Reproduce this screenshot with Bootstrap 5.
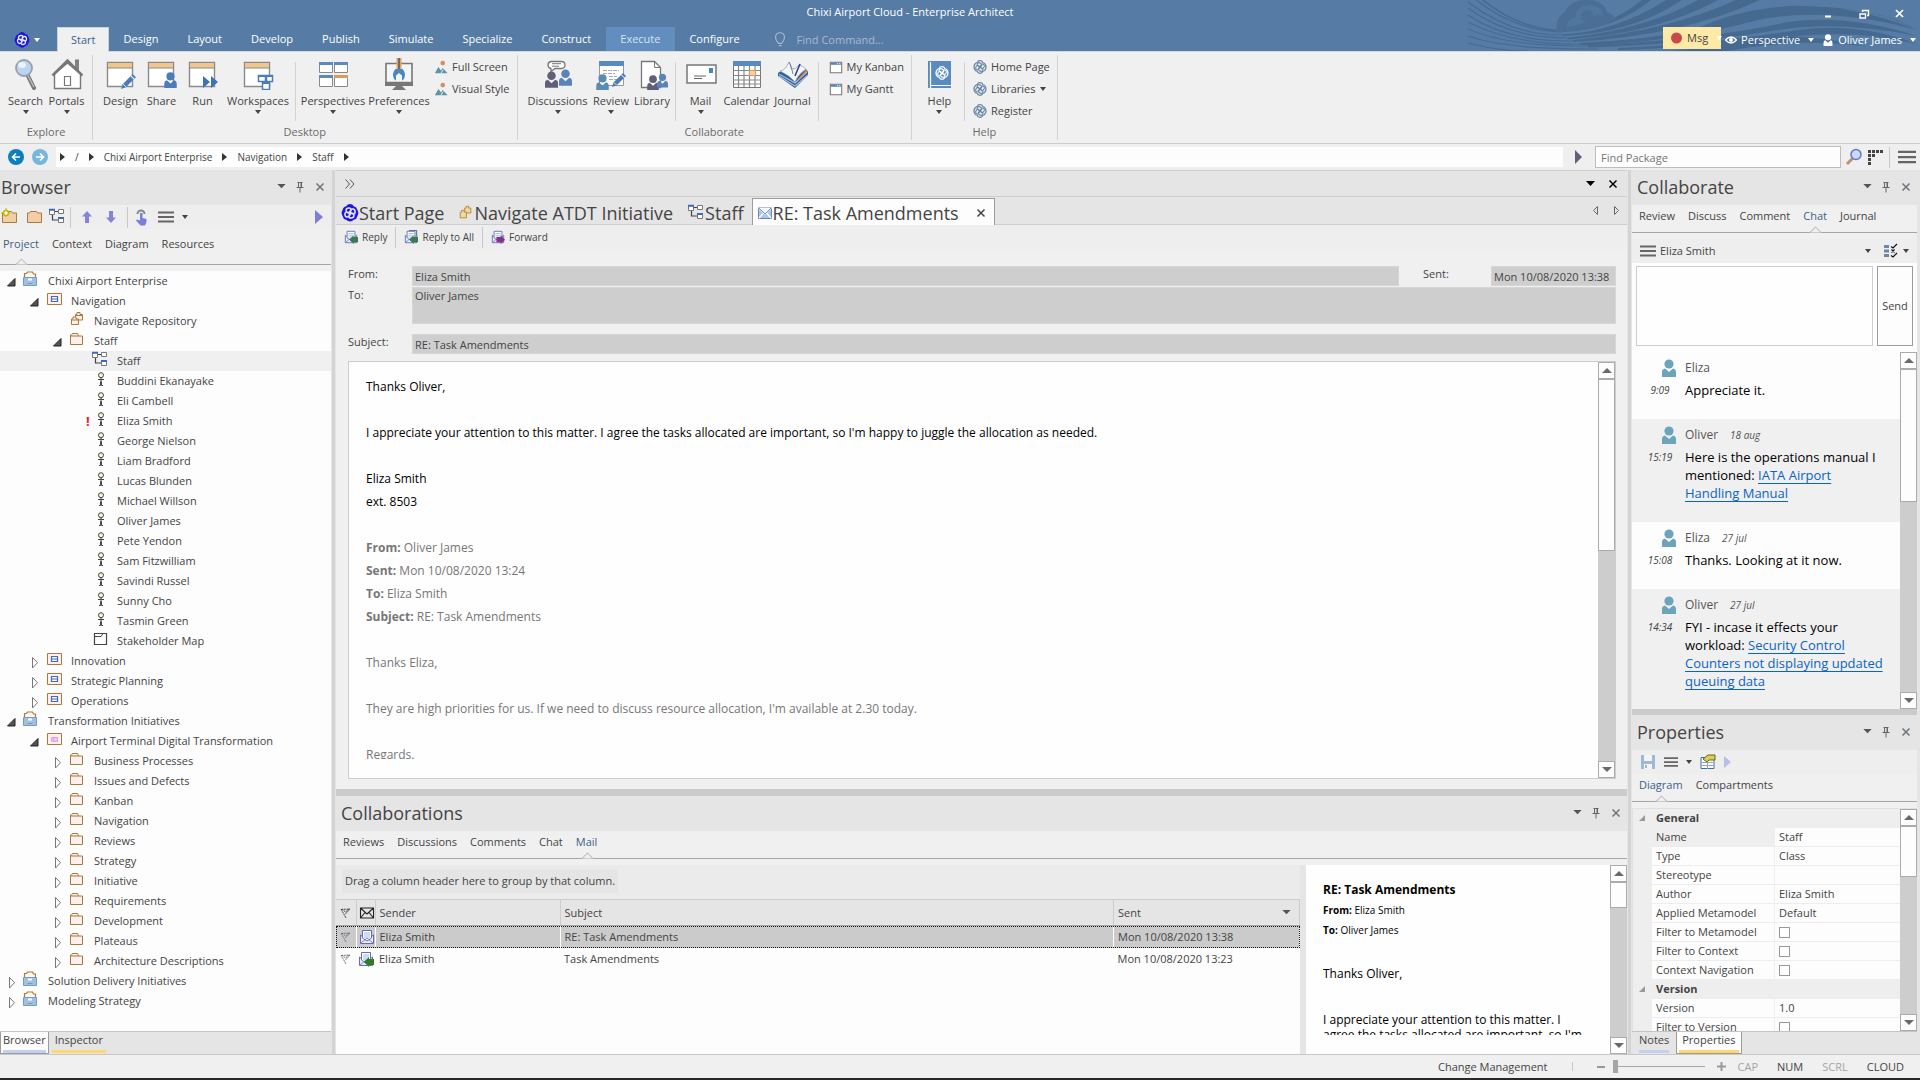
<!DOCTYPE html>
<html lang="en">
<head>
<meta charset="utf-8">
<meta name="viewport" content="width=device-width, initial-scale=1">
<title>Chixi Airport Cloud - Enterprise Architect</title>
<link rel="stylesheet" href="https://cdn.jsdelivr.net/npm/bootstrap@5.3.0/dist/css/bootstrap.min.css">
<style>
:root{--ui:"Open Sans","Noto Sans",sans-serif;--blue:#567ca6;--bar:#f0f0f0;--head:#e5e5e5;--line:#cdcdcd;--ink:#444}
body{font:11px/16px var(--ui);color:var(--ink);background:#e5e5e5;overflow:hidden}
button,input,select,textarea{font:inherit;color:inherit;border:0;background:none;padding:0;margin:0;border-radius:0;outline:0}
a{color:inherit;text-decoration:none}
svg{display:block;flex:none}
.i12{width:12px;height:12px}.i14{width:14px;height:14px}.i16{width:16px;height:16px}.i18{width:18px;height:18px}.i32{width:32px;height:32px}
.caret-sm{width:0;height:0;border:3px solid transparent;border-top:4px solid currentColor;border-bottom:0;flex:none}
/* title bar */
.titlebar{background:var(--blue);color:#fff;height:51px}
.banner{right:3px;top:0;width:449px;height:51px}
.cap-row{height:27px}.caption-txt{padding-top:4px}
.win-ctl{width:100px;padding-right:12px}
.rtab{padding:0 15px 0 14px;height:24px;line-height:23px;display:block}
.rtab.on{background:var(--bar);color:#3d5f8a;height:25px;border:1px solid #c9d3de;border-bottom:0;padding:0 13px}
.rtab.hot{background:#618ebf;color:#d5e2f0}
.app-btn{width:57px;padding-left:14px}
.find-cmd{width:200px;color:#a9b9ca}.find-cmd::placeholder{color:#a9b9ca}
.msg-btn{background:#ffe9a6;color:#444;height:22px;width:58px}
/* ribbon */
.ribbon{background:var(--bar);border-bottom:1px solid var(--line);border-top:1px solid #d8d8d8;height:93px}
.rgroup{border-right:1px solid #d2d2d2;margin:3px 0;padding:0 7px}
.rgroup.first{padding:0 5px}
.rgroup .rg-items{height:68px}
.rg-label{color:#6b6b6b;line-height:18px}
.vsep{width:1px;background:#d2d2d2;margin:7px 2px 2px}
.rb{padding-top:3px;width:41px;line-height:18px}
.rb svg{margin-bottom:2px}
.rb.w46{width:46px}.rb.w62{width:62px}.rb.w66{width:66px}.rb.w70{width:70px}
.rcol{padding-top:1px}
.rsmall{height:22px;gap:4px}
/* address bar */
.addr{height:27px;background:#efefef}
.addr .crumbs{background:#fdfdfd;height:20px;gap:10px;font-size:10px}
.tri{width:0;height:0;border:4px solid transparent;border-left:5px solid #333;border-right:0}
.find-pkg{width:246px;height:22px;border:1px solid #bdbdbd;background:#fdfdfd;padding:0 5px}
/* docks */
.dock-l{width:331px}.dock-r{width:285px;margin-right:3px}
.split-v{width:5px;background:#d4d4d4;border-right:1px solid #e5e5e5;border-left:1px solid #e5e5e5}
.dock-head{height:35px;background:var(--head);padding:0 5px 2px 1px}
.dock-title{font:18px/32px var(--ui);color:#444}
.tool{height:24px;background:#eee}
.sep24{width:1px;height:21px;background:#c8c8c8}
.dtabs{background:var(--bar);border-bottom:1px solid #a5a5a5}
.dtabs a{position:relative;display:block}
.dtabs a.on{color:#3d5f8a}
.dtabs a.on::after{content:"";position:absolute;left:50%;bottom:-5px;width:9px;height:9px;margin-left:-4px;transform:rotate(45deg);background:var(--bar);border:1px solid #a5a5a5;border-color:#a5a5a5 transparent transparent #a5a5a5;clip-path:polygon(0 0,100% 0,0 100%)}
.gapbar{height:6px;background:var(--bar)}
.pane-white{background:#fdfdfd}
/* tree */
.tree{list-style:none;margin:0;padding:0}
.tree li{height:20px;line-height:20px;display:flex;position:relative}
.tree li.sel{background:#f0f0f0}
.tree li>.i18{margin-right:8px}
.tree .tw{width:18px;height:20px;flex:none}
.lv0{padding-left:4px}.lv1{padding-left:27px}.lv2{padding-left:50px}.lv3{padding-left:73px}
.bang{position:absolute;left:86px;color:#f01818;font-weight:700;font-size:13px}
.btabs{height:23px;background:var(--head);border-top:1px solid #c4c4c4}
.btab{height:22px;padding:0 2px;line-height:16px;border:1px solid transparent;border-top:0}
.btab span{display:block;border-bottom:3px solid #c3d0f0;height:21px}
.btab.cur{background:#fdfdfd;border-color:#9c9c9c}
.btab.yel span{border-color:#ffd86b;padding:0 3px}
/* document area */
.docbar{height:27px;background:var(--head);border:1px solid var(--line);border-width:1px 0}
.doctabs{height:28px;background:var(--head);border-bottom:1px solid var(--line);font-size:18px;line-height:22px;padding-left:5px}
.doctab{padding:4px 14px 0 0}
.doctabs .cur{background:#fdfdfd;border:1px solid #9c9c9c;border-bottom:0;height:27px;margin-top:1px;padding:2px 7px 0 4px}
.mailtool{gap:4px;font-size:10px}
.mailform{background:var(--bar);padding:17px 11px 10px 12px}
.fgrid{display:grid;grid-template-columns:64px 1fr 92px 125px;row-gap:1px}
.fgrid label{line-height:15px}
.fld{background:#cecece;border:1px solid #d6d6d6;padding:0 2px;height:20px;line-height:15px;width:100%;resize:none;display:block}
.mail-box{border:1px solid var(--line);background:#fefefe;margin-top:7px}
.mail-txt{font:12px/23px var(--ui);color:#000;padding:13px 17px 0;margin-bottom:19px;overflow:hidden}
.mail-txt p{margin:0 0 23px}
.quoted{color:#777}
/* scrollbars */
.sbar{width:17px;background:#cdcdcd}
.sbar button,.sbar i{display:flex;align-items:center;justify-content:center;background:#fdfdfd;border:1px solid #ababab;flex:none;height:17px;width:100%}
.sbar .dn{margin-top:auto}
.up-a,.dn-a{width:0;height:0;border:5px solid transparent}
.up-a{border-bottom:5px solid #6a6a6a;border-top:0}.dn-a{border-top:5px solid #6a6a6a;border-bottom:0}
.th172{height:172px!important}.th150{height:133px!important}.th26{height:26px!important}.th51{height:51px!important}
/* mail list */
.collab{height:265px;border-top:7px solid #cbcbcb}
.groupby{height:34px;background:#ebebeb;padding:4px 6px}
.groupby span{background:#e5e5e5;padding:0 3px;line-height:24px;display:inline-block}
.mtable{width:100%;table-layout:fixed;border-collapse:collapse}
.mtable th{font-weight:400;background:var(--head);height:26px;border:1px solid var(--line);border-bottom-color:#a5a5a5;border-left:0;padding:0 4px}
.mtable td{height:23px;padding:0 4px}
.mtable tr.pick td{height:22px;background:#cbcbcb;border-right:1px solid #fff}
.mtable tr.pick{outline:1px dotted #111;outline-offset:-1px}
.c-f{width:20px}.c-m{width:19px}.c-s{width:185px}.c-d{width:186px}
.mtable .ic{padding:0 2px}
.split-p{width:6px;background:var(--head)}
.preview{width:304px;background:#fefefe;color:#000;padding:14px 17px 0;margin-bottom:0}
.pv-clip{height:156px;overflow:hidden;font-size:12px;line-height:15px}
.pv-clip p{margin:0}
/* chat */
.chatbox{height:80px;border:1px solid var(--line);background:#fefefe;resize:none}
.send{width:36px;height:80px;border:1px solid #9c9c9c;background:#fdfdfd}
.msg{padding:7px 0 12px 12px;gap:9px}
.msg:nth-child(even){background:#f0f0f0}
.msg .when{width:32px;font-style:italic;font-size:10px;line-height:18px}
.msg .who{font-size:12px;line-height:18px;color:#555}
.msg .who em{font-size:10px;margin-left:12px}
.msg .say{font-size:13px;line-height:18px;color:#000;margin-top:4px;padding-bottom:8px;white-space:nowrap}
.msg .say a{color:#0b63c5;text-decoration:underline;text-underline-offset:3px}
.bare-select{appearance:none}
/* property grid */
.pgrid{width:100%;table-layout:fixed;border-collapse:separate;border-spacing:0}
.pgrid td,.pgrid th{height:19px;padding:0 4px;border-bottom:1px solid #ededed;background:#fdfdfd;line-height:18px;font-weight:400}
.pgrid .gut{background:#eee;padding:0}
.pgrid .nm{border-right:1px solid #ededed}
.pgrid .nm.sel{background:#eee}
.pgrid .cat th{background:#eee;font-weight:700}
.g1{width:19px}.g2{width:123px}
.pgrid input[type=checkbox]{appearance:none;width:11px;height:11px;border:1px solid #999;background:#fff;display:block}
.tri-c{width:0;height:0;border-left:6px solid transparent;border-bottom:6px solid #999;margin-left:6px}
/* status */
.status{height:24px;background:var(--bar);border-top:1px solid #c8c8c8}
.zoomr{appearance:none;width:92px;height:14px}
.zoomr::-webkit-slider-runnable-track{height:1px;background:#a5a5a5}
.zoomr::-webkit-slider-thumb{appearance:none;width:5px;height:13px;background:#a5a5a5;margin-top:-6px}
.keys{gap:19px;padding-right:16px}
.dim{color:#a5a5a5}.strip{height:2px;background:#2b2729}
</style>
</head>
<body class="vh-100 d-flex flex-column">
<svg width="0" height="0" class="position-absolute" aria-hidden="true"><defs>
<symbol id="knot" viewBox="0 0 16 16"><g fill="none" stroke="currentColor" stroke-width="1.500"><path d="M8 .8q2.500 0 3.200 2.200 2.500.4 3 2.600 1.200 2.400 0 4.800-.5 2.200-3 2.600-.7 2.200-3.200 2.200T4.800 13q-2.500-.4-3-2.600-1.200-2.400 0-4.800.5-2.200 3-2.600Q5.500.8 8 .8z"/><path d="M8 8Q3.500 6 5 4t4 0-1 4zM8 8q4.500 2 3 4t-4 0 1-4zM8 8q2-4.500 4-3t0 4-4-1zM8 8q-2 4.500-4 3t0-4 4 1z" stroke-width="1.200"/></g></symbol>
<symbol id="logo" viewBox="0 0 16 16"><path d="M8 0a4 4 0 0 1 3.400 1.900A4 4 0 0 1 14.500 5.200 5 5 0 0 1 14.500 10.800 4 4 0 0 1 11.400 14.100 4.500 4.500 0 0 1 4.600 14.100 4 4 0 0 1 1.500 10.800 5 5 0 0 1 1.500 5.200 4 4 0 0 1 4.600 1.900 4 4 0 0 1 8 0z" fill="#1f18dc"/><g fill="none" stroke="#e6e8ff" stroke-width="1.300"><path d="M6.500 8C3.500 7 4 3.500 7 3.500c2.500 0 3 3-.5 4.500zM9.500 8c3 1 2.500 4.500-.5 4.500-2.500 0-3-3 .5-4.500zM8 6.500c1-3 4.500-2.500 4.500.5 0 2.500-3 3-4.500-.5zM8 9.500c-1 3-4.500 2.500-4.500-.5 0-2.500 3-3 4.500.5z"/></g></symbol>
<symbol id="pin" viewBox="0 0 12 12"><path d="M3.500 1.500h5M4.500 1.500v5M7.500 1.500v5M2.500 6.500h7M6 6.500v5" fill="none" stroke="#666"/><path d="M6.500 2h1v4h-1z" fill="#666"/></symbol>
<symbol id="ex" viewBox="0 0 12 12"><path d="M2.500 2.500l7 7M9.500 2.500l-7 7" stroke="currentColor" stroke-width="1.500"/></symbol>
<symbol id="ham" viewBox="0 0 16 16"><path d="M0 3.500h16M0 8h16M0 12.500h16" stroke="#666" stroke-width="2"/></symbol>
<symbol id="down" viewBox="0 0 10 6"><path d="M0 0h10L5 5z" fill="#555"/></symbol>
<symbol id="win" viewBox="0 0 32 32"><path d="M2.500 4.500h25v24h-25z" fill="#fff" stroke="#8a8a8a" stroke-width="1.400"/><path d="M3 5h24v5H3z" fill="#efc68c"/><path d="M3 10h24" stroke="#8a8a8a"/></symbol>
<symbol id="pencil" viewBox="0 0 16 16"><path d="M1 15l1.500-4.500L12 1l3 3-9.500 9.500z" fill="#4a7cba"/><path d="M10 2.500l3.500 3.500" stroke="#fff"/><path d="M3 10.500l2.500 2.500" stroke="#fff" stroke-width=".8"/></symbol>
<symbol id="man" viewBox="0 0 14 18"><circle cx="7" cy="5" r="4.600"/><path d="M0 18v-5q0-3 3-3.600L7 13l4-3.600q3 .6 3 3.600v5z"/></symbol>
<symbol id="r-search" viewBox="0 0 32 32"><path d="M17 16l7 14" stroke="#777" stroke-width="4" stroke-linecap="round"/><path d="M17 16l7 13" stroke="#bbb" stroke-width="1.500"/><circle cx="14" cy="10" r="8" fill="#b9d6f0" stroke="#9a9fb0" stroke-width="1.800"/><ellipse cx="12" cy="7" rx="4" ry="3" fill="#e8f3fc"/></symbol>
<symbol id="r-house" viewBox="0 0 32 32"><path d="M25 12V2.500h2V14" fill="none" stroke="#777" stroke-width="1.800"/><path d="M3.500 16v14.500h26V16L16.500 5z" fill="#fff" stroke="#777" stroke-width="1.400"/><path d="M1.500 17.500L16.500 2.500l15 15" fill="none" stroke="#777" stroke-width="2.600"/><path d="M13.500 18.500h6v9h-6z" fill="#fff" stroke="#777" stroke-width="1.200"/></symbol>
<symbol id="r-design" viewBox="0 0 32 32"><use href="#win"/><use href="#pencil" x="15" y="15" width="17" height="17"/></symbol>
<symbol id="r-share" viewBox="0 0 32 32"><use href="#win"/><use href="#man" x="18" y="14" width="13" height="16" fill="#4a7cba"/></symbol>
<symbol id="r-run" viewBox="0 0 32 32"><use href="#win"/><path d="M16 18l7 6-7 6zM24 18l7 6-7 6z" fill="#3f72b5"/></symbol>
<symbol id="r-work" viewBox="0 0 32 32"><use href="#win"/><g fill="#fff" stroke="#4a7cba" stroke-width="1.500"><path d="M16.500 17.500h7v6h-7zM24.500 17.500h6v6h-6zM20.500 24.500h7v7h-7z"/><path d="M16.500 18h14M20.500 25h7" stroke-width="2"/></g></symbol>
<symbol id="r-persp" viewBox="0 0 32 32"><g fill="#fff" stroke="#8a8a8a"><path d="M2.500 4.500h13v10h-13zM17.500 4.500h13v10h-13zM2.500 17.500h13v11h-13zM17.500 17.500h13v11h-13z"/></g><path d="M2 4h14v3H2zM17 4h14v3H17zM2 17h14v3H2z" fill="#5a8bc0"/><path d="M17 17h14v3H17z" fill="#d99a63"/></symbol>
<symbol id="r-pref" viewBox="0 0 32 32"><path d="M3 5.500h26v19H3z" fill="#f5f5f5" stroke="#777" stroke-width="1.600"/><path d="M2 24h28v4H2zM13 28h6l4 4H9z" fill="#777"/><path d="M13.500 0h5v11h-5z" fill="#e0a565"/><path d="M16 0v11" stroke="#4a4a6a" stroke-width="1.400"/><path d="M12.500 11h7q4 4 1.500 10l-2 1.500v-5l-3-2.500-3 2.500v5L11 21q-2.500-6 1.500-10z" fill="#4a88c4"/></symbol>
<symbol id="pic" viewBox="0 0 16 16"><circle cx="10" cy="3.500" r="2.700" fill="#d58f60"/><path d="M1 15l4-7 3 4 2-3 5.500 6z" fill="#5b93a8"/><path d="M8 15l2.500-4" stroke="#fff"/></symbol>
<symbol id="r-disc" viewBox="0 0 32 32"><path d="M9 3.500h10q4 0 4 3.500t-4 3.500h-6l-4 3v-3Q6 10 6 7t3-3.500z" fill="#fff" stroke="#777" stroke-width="1.300"/><path d="M10 5.700h9M10 8.200h7" stroke="#777"/><use href="#man" x="3" y="13" width="13" height="17" fill="#5f6078"/><use href="#man" x="17" y="11" width="13" height="17" fill="#5a83ba"/></symbol>
<symbol id="r-rev" viewBox="0 0 32 32"><path d="M4.500 3.500h24v24h-24z" fill="#fff" stroke="#999"/><path d="M4 3h25v5H4z" fill="#5a8bc0"/><path d="M8 12.500h16M8 15.500h12M14 18.500h8M14 21.500h8" stroke="#aaa" stroke-dasharray="4 1"/><use href="#man" x="1" y="16" width="13" height="16" fill="#5a8bb0"/><use href="#pencil" x="16" y="14" width="16" height="16"/></symbol>
<symbol id="r-lib" viewBox="0 0 32 32"><path d="M5.500 3.500h13l6 6v20h-19z" fill="#fff" stroke="#777" stroke-width="1.300"/><path d="M18.500 3.500v6h6" fill="none" stroke="#777"/><use href="#man" x="11" y="17" width="12" height="15" fill="#5f6078"/><use href="#man" x="21" y="15" width="11" height="15" fill="#5a83ba"/></symbol>
<symbol id="r-mail" viewBox="0 0 32 32"><path d="M2 7h29v18H2z" fill="#fff" stroke="#777" stroke-width="1.500"/><path d="M24 10h4v5h-4z" fill="#4a83c0"/><path d="M9 18h12M9 20.500h8" stroke="#666" stroke-width="1.200"/></symbol>
<symbol id="r-cal" viewBox="0 0 32 32"><path d="M2.500 3.500h27v26h-27z" fill="#fff" stroke="#777"/><path d="M2 3h28v5H2z" fill="#5a8bc0"/><path d="M7.500 8v21M13 8v21M18.500 8v21M24 8v21M3 12.500h27M3 17.500h27M3 22h27M3 26h27" stroke="#888" stroke-width="1.200"/><path d="M18.500 12.500h6v5h-6z" fill="#f8d0a0" stroke="#d79a5a"/></symbol>
<symbol id="r-jour" viewBox="0 0 32 32"><path d="M1 15l3-2 14 8 11-10 2 3v3L18 30 1 18z" fill="#2f5a92"/><path d="M3 13Q8 13 12 4q3 3 2 7 5 1 8-4 4 1 7 4-7 4-11 13-6-7-15-11z" fill="#f4f8fd" stroke="#8fa3c0" stroke-width=".8"/><path d="M2 16l16 9 12-11M2 18l16 10 13-11" fill="none" stroke="#a9c2e4" stroke-width="1.200"/><path d="M12 4q3 6 4 12" fill="none" stroke="#6d84ac"/><path d="M23 6l-5 12" stroke="#39408a" stroke-width="1.600"/><path d="M30 12l-8 9" stroke="#e08a4a" stroke-width="1.600"/></symbol>
<symbol id="kan" viewBox="0 0 16 16"><path d="M1.500 2.500h13v12h-13z" fill="#fff" stroke="#777" stroke-width="1.200"/><path d="M2 3h12v2.500H2z" fill="#5a83ba"/><path d="M9 4.200h1.500M11.500 4.200H13" stroke="#fff"/></symbol>
<symbol id="r-help" viewBox="0 0 32 32"><path d="M5 3h23v27H5z" fill="#5a8bc0"/><path d="M7.500 4v26M7 27.500h21" stroke="#fff" stroke-width="1.200"/><use href="#knot" x="12" y="8" width="14" height="14" color="#fff"/></symbol>
<symbol id="folder" viewBox="0 0 18 18"><path d="M2.500 13.500V4h1l1-1.500h5L10.500 5h4v8.500z" fill="#fdf0ee" stroke="#ab7a38"/><path d="M3 5h8" stroke="#ab7a38"/></symbol>
<symbol id="bfolder" viewBox="0 0 18 18"><path d="M1.500 14.500V5h2l1-1.500h6L11.500 5h4v9.500z" fill="#f2cda6" stroke="#a87a45"/></symbol>
<symbol id="root" viewBox="0 0 18 18"><path d="M2.500 6.500v-4h2l1-1.500h5l1 2h2v3.500" fill="#fff7ee" stroke="#ab7a38" stroke-width="1.200"/><path d="M1.500 6.500h13v8h-13z" fill="#a3c1de" stroke="#6f9cc9"/><path d="M6 7.500h4v2H6z" fill="#fff"/><path d="M5.500 12.500h5" stroke="#6f9cc9"/></symbol>
<symbol id="view" viewBox="0 0 18 18"><path d="M2.500 2.500h14v11h-14z" fill="#fdf0ee" stroke="#ab7a38"/><path d="M6.500 5.500h6v5h-6zM6.500 8h6" fill="#fff" stroke="#4468c4" stroke-width="1.200"/></symbol>
<symbol id="viewp" viewBox="0 0 18 18"><path d="M2.500 2.500h14v11h-14z" fill="#fdf0ee" stroke="#ab7a38"/><path d="M6.500 6.500h6v4h-6zM8.500 6.500v4" fill="#f3c3ea" stroke="#e89be0"/></symbol>
<symbol id="navi" viewBox="0 0 18 18"><g fill="#fdf0ee" stroke="#ab7a38"><path d="M7.500 9V3.500h1.500v-2h3v2h2.500V9zM7.500 4.500h7"/><path d="M3.500 13.500V8h1.500V6h3v2h2.500v5.500zM3.500 9h7"/></g></symbol>
<symbol id="navi-g" viewBox="0 0 18 18"><g fill="#ecd6ae" stroke="#b58a20"><path d="M7.500 9V3.500h1.500v-2h3v2h2.500V9z"/><path d="M2.500 14.500V8h1.500V6h3v2h2.500v6.500z"/></g></symbol>
<symbol id="diag" viewBox="0 0 18 18"><path d="M4.500 6v6h6M6 3.500h4" fill="none" stroke="#444" stroke-width="1.200"/><g fill="#fff" stroke="#777"><path d="M1.500 1.500h5v5h-5zM10.500 1.500h5v4h-5zM10.500 9.500h5v5h-5z"/></g><path d="M1 .8h6v2H1zM10 9h6v2h-6z" fill="#3f66c0"/></symbol>
<symbol id="actor" viewBox="0 0 18 18"><circle cx="10" cy="4.200" r="2.500" fill="#fdf3d0" stroke="#444"/><path d="M10 7v4M7 8.500h6M9.500 10.500V14.500M10.500 10.500V14.500M8 14.500h1.500M10.500 14.500H12" stroke="#444" fill="none"/></symbol>
<symbol id="map" viewBox="0 0 18 18"><path d="M3.500 2.500h12v11h-12z" fill="#fff" stroke="#444" stroke-width="1.200"/><path d="M4 5.500h6l2-3" fill="none" stroke="#444"/></symbol>
<symbol id="tw-o" viewBox="0 0 18 20"><path d="M3.500 15H11V7.500z" fill="#555" stroke="#222"/></symbol>
<symbol id="tw-c" viewBox="0 0 18 20"><path d="M5.500 6.500v10.500L10.500 11.700z" fill="#fff" stroke="#777"/></symbol>
<symbol id="openmail" viewBox="0 0 16 16"><path d="M1.500 6v8.500h13V6L8 11z" fill="#e9ecff" stroke="#6a69b5"/><path d="M3.500 9V1.500h9V9L8 12z" fill="#fff" stroke="#6a69b5"/><path d="M5 4h6M5 6h6M5 8h6" stroke="#8fc0e6"/><path d="M2 14l6-5 6 5" fill="none" stroke="#6a69b5" stroke-width=".8"/></symbol>
<symbol id="arrow-l" viewBox="0 0 10 10"><path d="M0 5l5-5v2h5v6H5v2z"/></symbol>
<symbol id="flag" viewBox="0 0 16 16"><path d="M3 4.500l9-.5-5 5.500M3 4l5 9M4 4l3.500 3L11 4" fill="none" stroke="currentColor" stroke-dasharray="2 .7"/></symbol>
<symbol id="env" viewBox="0 0 16 16"><path d="M1.500 3h13v10h-13zM1.500 3L8 9l6.500-6M1.500 13L6 7.500M14.500 13L10 7.500" fill="none" stroke="#222" stroke-width="1.100"/></symbol>
<symbol id="mailtab" viewBox="0 0 16 16"><path d="M1.500 2.500h13v11h-13z" fill="#a9c8f0" stroke="#6f86a8"/><path d="M2 3l6 6 6-6zM2 13l4.500-5M14 13L9.500 8" fill="#eef5fd" stroke="#fff" stroke-width="1.200"/><path d="M2 3l6 6 6-6" fill="none" stroke="#6f86a8" stroke-width=".9"/></symbol>
</defs></svg>

<header class="titlebar position-relative">
<svg class="banner position-absolute" viewBox="0 0 449 51" preserveAspectRatio="none" aria-hidden="true">
<g fill="none" stroke="#476a92" stroke-width="1.100"><path d="M8 0Q50 32 95 32"/><path d="M15 0Q52 30 95 30.500" stroke-width="1.600"/><path d="M0 2Q44 36 95 35"/><path d="M0 8Q40 38 100 38"/><path d="M0 15Q40 42 105 41"/><path d="M0 22Q44 45 112 44"/><path d="M0 29Q40 47 120 46"/><path d="M0 36Q40 50 130 49"/><path d="M0 43Q30 51 60 51"/></g>
<g fill="#46698f"><path d="M95 32Q146 30 183 0h-9Q140 28 95 30z"/><path d="M95 36Q165 33 214 0h-16Q150 31 95 34.500z"/><path d="M100 39.500Q190 33 250 0h-20Q176 30 100 37.500z"/><path d="M105 42Q215 36 292 0h-24Q200 31 105 40z"/><path d="M112 45Q210 42 280 20 340 2 400 12 430 18 449 30 420 14 385 10 350 3 290 14 220 38 112 43z"/><path d="M112 45Q200 44 290 20 360 6 449 30 385 4 320 6 270 10 235 26 190 40 112 43z"/><path d="M120 47.500Q230 44 310 30 370 20 449 36 380 14 320 22 240 40 120 45z"/><path d="M150 50Q250 46 330 36 390 30 449 44 390 22 330 30 240 44 150 48z"/><path d="M200 51h60q70-14 140-4-80-18-130-6-40 8-70 10z"/></g>
<path d="M89 31q-2-14 8-19Q102-1 122 0q14 1 17 12 6 2 9 7-24 13-59 12z" fill="#4b6e97"/><path d="M98 28q1-10 9-10 1-13 17-13 11 2 11 11-6-4-10 2-4-2-6 4" fill="#567ca6" opacity=".55"/><circle cx="119" cy="16" r="6" fill="#4b6e97"/>
</svg>
<div class="cap-row d-flex position-relative">
<div class="flex-grow-1 text-center caption-txt">Chixi Airport Cloud - Enterprise Architect</div>
<div class="win-ctl d-flex justify-content-between align-items-center">
<button type="button" aria-label="Minimize"><svg class="i16" viewBox="0 0 16 16"><path d="M5 10.500h6" stroke="#fff" stroke-width="2"/></svg></button>
<button type="button" aria-label="Restore"><svg class="i16" viewBox="0 0 16 16"><path d="M6.500 6V4.500h6v5H11M4 8h5.500v4H4z" fill="none" stroke="#fff" stroke-width="1.400"/></svg></button>
<button type="button" aria-label="Close"><svg class="i16" viewBox="0 0 16 16"><path d="M4 4l7 7M11 4l-7 7" stroke="#fff" stroke-width="1.700"/></svg></button>
</div></div>
<div class="d-flex position-relative">
<button type="button" class="app-btn d-flex align-items-center gap-1" aria-label="Application menu"><svg class="i16"><use href="#logo"/></svg><span class="caret-sm"></span></button>
<nav class="d-flex align-items-start"><a class="rtab on" href="#">Start</a><a class="rtab" href="#">Design</a><a class="rtab" href="#">Layout</a><a class="rtab" href="#">Develop</a><a class="rtab" href="#">Publish</a><a class="rtab" href="#">Simulate</a><a class="rtab" href="#">Specialize</a><a class="rtab" href="#">Construct</a><a class="rtab hot" href="#">Execute</a><a class="rtab" href="#">Configure</a></nav>
<label class="d-flex align-items-center ms-2 ps-2 gap-2"><svg class="i18" viewBox="0 0 16 16"><path d="M6.500 11Q4 8 4 5.500a4 4 0 0 1 8 0Q12 8 9.500 11zM7 13h2.500" fill="none" stroke="#a9b9ca"/></svg><input class="find-cmd" type="text" placeholder="Find Command..." aria-label="Find Command"></label>
<div class="d-flex align-items-start ms-auto me-1">
<button type="button" class="msg-btn d-flex align-items-center gap-1 ps-2 me-1"><svg class="i12" viewBox="0 0 12 12"><circle cx="5.500" cy="6" r="5.500" fill="#c9484a"/></svg>Msg<span class="caret-sm text-white ms-1"></span></button>
<button type="button" class="d-flex align-items-center gap-1 me-1 h-100"><svg class="i12" viewBox="0 0 12 12"><path d="M.5 6Q6 0 11.500 6 6 12 .5 6z" fill="none" stroke="#fff" stroke-width="1.500"/><circle cx="6" cy="6" r="2" fill="#fff"/></svg>Perspective<span class="caret-sm ms-1"></span></button>
<button type="button" class="d-flex align-items-center gap-1 h-100 ps-1"><svg class="i12" viewBox="0 0 14 18"><use href="#man" fill="#fff"/></svg>Oliver James<span class="caret-sm ms-1"></span></button>
</div></div>
</header>

<section class="ribbon d-flex" aria-label="Ribbon">
<div class="rgroup first"><div class="rg-items d-flex">
<button type="button" class="rb d-flex flex-column align-items-center"><svg class="i32"><use href="#r-search"/></svg>Search<span class="caret-sm"></span></button>
<button type="button" class="rb d-flex flex-column align-items-center"><svg class="i32"><use href="#r-house"/></svg>Portals<span class="caret-sm"></span></button></div>
<div class="rg-label text-center">Explore</div></div>
<div class="rgroup"><div class="rg-items d-flex">
<button type="button" class="rb d-flex flex-column align-items-center"><svg class="i32"><use href="#r-design"/></svg>Design</button>
<button type="button" class="rb d-flex flex-column align-items-center"><svg class="i32"><use href="#r-share"/></svg>Share</button>
<button type="button" class="rb d-flex flex-column align-items-center"><svg class="i32"><use href="#r-run"/></svg>Run</button>
<button type="button" class="rb w70 d-flex flex-column align-items-center"><svg class="i32"><use href="#r-work"/></svg>Workspaces<span class="caret-sm"></span></button>
<span class="vsep"></span>
<button type="button" class="rb w70 d-flex flex-column align-items-center"><svg class="i32"><use href="#r-persp"/></svg>Perspectives<span class="caret-sm"></span></button>
<button type="button" class="rb w62 d-flex flex-column align-items-center"><svg class="i32"><use href="#r-pref"/></svg>Preferences<span class="caret-sm"></span></button>
<div class="rcol d-flex flex-column ps-1"><button type="button" class="rsmall d-flex align-items-center"><svg class="i14"><use href="#pic"/></svg>Full Screen</button><button type="button" class="rsmall d-flex align-items-center"><svg class="i14"><use href="#pic"/></svg>Visual Style</button></div></div>
<div class="rg-label text-center">Desktop</div></div>
<div class="rgroup"><div class="rg-items d-flex">
<button type="button" class="rb w66 d-flex flex-column align-items-center"><svg class="i32"><use href="#r-disc"/></svg>Discussions<span class="caret-sm"></span></button>
<button type="button" class="rb d-flex flex-column align-items-center"><svg class="i32"><use href="#r-rev"/></svg>Review<span class="caret-sm"></span></button>
<button type="button" class="rb d-flex flex-column align-items-center"><svg class="i32"><use href="#r-lib"/></svg>Library</button>
<span class="vsep"></span>
<button type="button" class="rb w46 d-flex flex-column align-items-center"><svg class="i32"><use href="#r-mail"/></svg>Mail<span class="caret-sm"></span></button>
<button type="button" class="rb w46 d-flex flex-column align-items-center"><svg class="i32"><use href="#r-cal"/></svg>Calendar</button>
<button type="button" class="rb w46 d-flex flex-column align-items-center"><svg class="i32"><use href="#r-jour"/></svg>Journal</button>
<span class="vsep"></span>
<div class="rcol d-flex flex-column ps-2"><button type="button" class="rsmall d-flex align-items-center"><svg class="i14"><use href="#kan"/></svg>My Kanban</button><button type="button" class="rsmall d-flex align-items-center"><svg class="i14"><use href="#kan"/></svg>My Gantt</button></div></div>
<div class="rg-label text-center">Collaborate</div></div>
<div class="rgroup"><div class="rg-items d-flex">
<button type="button" class="rb d-flex flex-column align-items-center"><svg class="i32"><use href="#r-help"/></svg>Help<span class="caret-sm"></span></button>
<span class="vsep mx-1"></span>
<div class="rcol d-flex flex-column ps-1"><a href="#" class="rsmall d-flex align-items-center"><svg class="i14"><use href="#knot" color="#6585a8"/></svg>Home Page</a><button type="button" class="rsmall d-flex align-items-center"><svg class="i14"><use href="#knot" color="#6585a8"/></svg>Libraries<span class="caret-sm"></span></button><a href="#" class="rsmall d-flex align-items-center"><svg class="i14"><use href="#knot" color="#6585a8"/></svg>Register</a></div></div>
<div class="rg-label text-center">Help</div></div>
</section>

<nav class="addr d-flex align-items-center" aria-label="Location">
<div class="d-flex gap-2 ps-2 me-1 pe-1">
<button type="button" aria-label="Back"><svg class="i16" viewBox="0 0 16 16"><circle cx="8" cy="8" r="8" fill="#0d7fc1"/><path d="M12 8H4.500M8 4.500L4.500 8 8 11.500" fill="none" stroke="#fff" stroke-width="1.600"/></svg></button>
<button type="button" aria-label="Forward"><svg class="i16" viewBox="0 0 16 16"><circle cx="8" cy="8" r="8" fill="#77b7dc"/><path d="M4 8h7.500M8 4.500L11.500 8 8 11.500" fill="none" stroke="#fff" stroke-width="1.600"/></svg></button></div>
<div class="crumbs d-flex align-items-center flex-grow-1 ps-1"><span class="tri"></span><a href="#">/</a><span class="tri"></span><a href="#">Chixi Airport Enterprise</a><span class="tri"></span><a href="#">Navigation</a><span class="tri"></span><a href="#">Staff</a><span class="tri"></span></div>
<button type="button" class="px-2 mx-1" aria-label="Go"><svg width="8" height="14" viewBox="0 0 8 14"><path d="M0 0l7 7-7 7z" fill="#5f5f78"/></svg></button>
<input class="find-pkg" type="text" placeholder="Find Package" aria-label="Find Package">
<button type="button" class="ms-1" aria-label="Search package"><svg class="i18" viewBox="0 0 18 18"><path d="M2 16l6-6" stroke="#b8956a" stroke-width="3"/><circle cx="11" cy="6.500" r="5" fill="#c5dcf8" stroke="#6d74c4" stroke-width="1.500"/></svg></button>
<svg class="i18 ms-1" viewBox="0 0 18 18"><path d="M1 3.500h16M1 7.500h7M1 11.500h3M1 15.500h3" stroke="#444" stroke-width="3" stroke-dasharray="3 1"/></svg>
<span class="sep24 mx-1"></span>
<button type="button" aria-label="Menu"><svg class="i18 mx-1"><use href="#ham"/></svg></button>
</nav>

<main class="d-flex flex-grow-1" style="min-height:0">
<aside class="dock-l d-flex flex-column flex-shrink-0">
<div class="dock-head d-flex align-items-center flex-shrink-0"><h2 class="dock-title m-0 me-auto">Browser</h2><div class="d-flex align-items-center gap-2"><svg width="9" height="5"><use href="#down"/></svg><svg class="i12"><use href="#pin"/></svg><svg class="i12 text-secondary"><use href="#ex"/></svg></div></div>
<div class="tool d-flex align-items-center flex-shrink-0">
<div class="d-flex gap-1"><svg class="i18" viewBox="0 0 18 18"><use href="#bfolder" x="1"/><circle cx="6" cy="5" r="2.500" fill="#fff" stroke="#c2b400" stroke-width="1.500"/><path d="M6 0v2M6 7v2M1 5h2M8 5h2" stroke="#c2b400"/></svg><svg class="i18 ms-1"><use href="#bfolder"/></svg><svg class="i18"><use href="#diag"/></svg></div>
<span class="sep24 mx-1"></span>
<svg class="i16 ms-1 me-2" viewBox="0 0 16 16"><path d="M8 2l5 5.500h-3V14H6V7.500H3z" fill="#8484dc"/></svg><svg class="i16" viewBox="0 0 16 16"><path d="M8 14L3 8.500h3V2h4v6.500h3z" fill="#8484dc"/></svg>
<span class="sep24 ms-2 me-1"></span>
<svg class="i18 me-2" viewBox="0 0 18 18"><path d="M5.500 6a3.500 3.500 0 1 1 7 0" fill="none" stroke="#888" stroke-width="2"/><path d="M8 5h2.500v5l4 1v3l-1.500 3.500H8.500L4 12.500l1-1 3 1z" fill="#7d7ddb"/></svg><svg class="i16"><use href="#ham"/></svg><span class="caret-sm ms-2"></span>
<svg width="8" height="14" viewBox="0 0 8 14" class="ms-auto me-2"><path d="M0 0l8 7-8 7z" fill="#7d7ddb"/></svg></div>
<nav class="dtabs d-flex flex-shrink-0" style="height:36px;line-height:30px;gap:13px;padding-left:3px"><a class="on" href="#">Project</a><a href="#">Context</a><a href="#">Diagram</a><a href="#">Resources</a></nav>
<div class="gapbar flex-shrink-0"></div>
<div class="pane-white flex-grow-1 overflow-hidden"><ul class="tree">
<li class="lv0"><svg class="tw"><use href="#tw-o"/></svg><svg class="i18"><use href="#root"/></svg><a href="#">Chixi Airport Enterprise</a></li>
<li class="lv1"><svg class="tw"><use href="#tw-o"/></svg><svg class="i18"><use href="#view"/></svg><a href="#">Navigation</a></li>
<li class="lv2"><span class="tw"></span><svg class="i18"><use href="#navi"/></svg><a href="#">Navigate Repository</a></li>
<li class="lv2"><svg class="tw"><use href="#tw-o"/></svg><svg class="i18"><use href="#folder"/></svg><a href="#">Staff</a></li>
<li class="lv3 sel"><span class="tw"></span><svg class="i18"><use href="#diag"/></svg><a href="#">Staff</a></li>
<li class="lv3"><span class="tw"></span><svg class="i18"><use href="#actor"/></svg><a href="#">Buddini Ekanayake</a></li>
<li class="lv3"><span class="tw"></span><svg class="i18"><use href="#actor"/></svg><a href="#">Eli Cambell</a></li>
<li class="lv3"><span class="bang">!</span><span class="tw"></span><svg class="i18"><use href="#actor"/></svg><a href="#">Eliza Smith</a></li>
<li class="lv3"><span class="tw"></span><svg class="i18"><use href="#actor"/></svg><a href="#">George Nielson</a></li>
<li class="lv3"><span class="tw"></span><svg class="i18"><use href="#actor"/></svg><a href="#">Liam Bradford</a></li>
<li class="lv3"><span class="tw"></span><svg class="i18"><use href="#actor"/></svg><a href="#">Lucas Blunden</a></li>
<li class="lv3"><span class="tw"></span><svg class="i18"><use href="#actor"/></svg><a href="#">Michael Willson</a></li>
<li class="lv3"><span class="tw"></span><svg class="i18"><use href="#actor"/></svg><a href="#">Oliver James</a></li>
<li class="lv3"><span class="tw"></span><svg class="i18"><use href="#actor"/></svg><a href="#">Pete Yendon</a></li>
<li class="lv3"><span class="tw"></span><svg class="i18"><use href="#actor"/></svg><a href="#">Sam Fitzwilliam</a></li>
<li class="lv3"><span class="tw"></span><svg class="i18"><use href="#actor"/></svg><a href="#">Savindi Russel</a></li>
<li class="lv3"><span class="tw"></span><svg class="i18"><use href="#actor"/></svg><a href="#">Sunny Cho</a></li>
<li class="lv3"><span class="tw"></span><svg class="i18"><use href="#actor"/></svg><a href="#">Tasmin Green</a></li>
<li class="lv3"><span class="tw"></span><svg class="i18"><use href="#map"/></svg><a href="#">Stakeholder Map</a></li>
<li class="lv1"><svg class="tw"><use href="#tw-c"/></svg><svg class="i18"><use href="#view"/></svg><a href="#">Innovation</a></li>
<li class="lv1"><svg class="tw"><use href="#tw-c"/></svg><svg class="i18"><use href="#view"/></svg><a href="#">Strategic Planning</a></li>
<li class="lv1"><svg class="tw"><use href="#tw-c"/></svg><svg class="i18"><use href="#view"/></svg><a href="#">Operations</a></li>
<li class="lv0"><svg class="tw"><use href="#tw-o"/></svg><svg class="i18"><use href="#root"/></svg><a href="#">Transformation Initiatives</a></li>
<li class="lv1"><svg class="tw"><use href="#tw-o"/></svg><svg class="i18"><use href="#viewp"/></svg><a href="#">Airport Terminal Digital Transformation</a></li>
<li class="lv2"><svg class="tw"><use href="#tw-c"/></svg><svg class="i18"><use href="#folder"/></svg><a href="#">Business Processes</a></li>
<li class="lv2"><svg class="tw"><use href="#tw-c"/></svg><svg class="i18"><use href="#folder"/></svg><a href="#">Issues and Defects</a></li>
<li class="lv2"><svg class="tw"><use href="#tw-c"/></svg><svg class="i18"><use href="#folder"/></svg><a href="#">Kanban</a></li>
<li class="lv2"><svg class="tw"><use href="#tw-c"/></svg><svg class="i18"><use href="#folder"/></svg><a href="#">Navigation</a></li>
<li class="lv2"><svg class="tw"><use href="#tw-c"/></svg><svg class="i18"><use href="#folder"/></svg><a href="#">Reviews</a></li>
<li class="lv2"><svg class="tw"><use href="#tw-c"/></svg><svg class="i18"><use href="#folder"/></svg><a href="#">Strategy</a></li>
<li class="lv2"><svg class="tw"><use href="#tw-c"/></svg><svg class="i18"><use href="#folder"/></svg><a href="#">Initiative</a></li>
<li class="lv2"><svg class="tw"><use href="#tw-c"/></svg><svg class="i18"><use href="#folder"/></svg><a href="#">Requirements</a></li>
<li class="lv2"><svg class="tw"><use href="#tw-c"/></svg><svg class="i18"><use href="#folder"/></svg><a href="#">Development</a></li>
<li class="lv2"><svg class="tw"><use href="#tw-c"/></svg><svg class="i18"><use href="#folder"/></svg><a href="#">Plateaus</a></li>
<li class="lv2"><svg class="tw"><use href="#tw-c"/></svg><svg class="i18"><use href="#folder"/></svg><a href="#">Architecture Descriptions</a></li>
<li class="lv0"><svg class="tw"><use href="#tw-c"/></svg><svg class="i18"><use href="#root"/></svg><a href="#">Solution Delivery Initiatives</a></li>
<li class="lv0"><svg class="tw"><use href="#tw-c"/></svg><svg class="i18"><use href="#root"/></svg><a href="#">Modeling Strategy</a></li>
</ul></div>
<div class="btabs d-flex flex-shrink-0"><a href="#" class="btab cur"><span>Browser</span></a><a href="#" class="btab yel"><span>Inspector</span></a></div>
</aside>
<div class="split-v flex-shrink-0"></div>

<section class="d-flex flex-column flex-grow-1" style="min-width:0">
<div class="docbar d-flex align-items-center px-2 flex-shrink-0"><svg class="i12 me-auto" viewBox="0 0 12 12"><path d="M1.500 1.500L5.500 6l-4 4.500M6 1.500L10 6l-4 4.500" fill="none" stroke="#555"/></svg><svg width="9" height="5" class="me-2"><path d="M0 0h9L4.500 5z"/></svg><svg class="i12 text-black ms-1"><use href="#ex"/></svg></div>
<nav class="doctabs d-flex flex-shrink-0">
<a href="#" class="doctab d-flex align-items-center"><svg class="i18"><use href="#logo"/></svg>Start Page</a>
<a href="#" class="doctab d-flex align-items-center"><svg class="i16"><use href="#navi-g"/></svg>Navigate ATDT Initiative</a>
<a href="#" class="doctab d-flex align-items-center pe-2"><svg class="i18"><use href="#diag"/></svg>Staff</a>
<a href="#" class="cur d-flex align-items-center"><svg class="i16"><use href="#mailtab"/></svg>RE: Task Amendments<svg class="i12 ms-3"><use href="#ex"/></svg></a>
<div class="d-flex align-items-center gap-3 ms-auto me-2"><svg width="5" height="9"><path d="M4.500 .5v8L.5 4.500z" fill="none" stroke="#666"/></svg><svg width="5" height="9"><path d="M.5 .5v8l4-4z" fill="none" stroke="#666"/></svg></div></nav>
<div class="tool d-flex align-items-center ps-2 flex-shrink-0">
<button type="button" class="mailtool d-flex align-items-center"><svg class="i14" viewBox="0 0 16 16"><use href="#openmail"/><use href="#arrow-l" x="6" y="6" width="10" height="10" fill="#3a7a50"/></svg>Reply</button><span class="sep24 mx-2"></span>
<button type="button" class="mailtool d-flex align-items-center"><svg class="i14" viewBox="0 0 16 16"><path d="M5.500.5h9v12" fill="none" stroke="#4a4a80"/><use href="#openmail"/><use href="#arrow-l" x="6" y="6" width="10" height="10" fill="#3a7a50"/></svg>Reply to All</button><span class="sep24 mx-2"></span>
<button type="button" class="mailtool d-flex align-items-center"><svg class="i14" viewBox="0 0 16 16"><use href="#openmail"/><use href="#arrow-l" transform="translate(16 6) scale(-1 1)" width="10" height="10" fill="#84318c"/></svg>Forward</button></div>
<div class="mailform d-flex flex-column flex-grow-1" style="min-height:0">
<div class="fgrid"><label for="f">From:</label><input id="f" class="fld" readonly value="Eliza Smith"><label for="s" class="ps-4">Sent:</label><input id="s" class="fld" readonly value="Mon 10/08/2020 13:38"></div>
<div class="d-flex" style="margin-top:1px"><label for="t" style="width:64px">To:</label><textarea id="t" class="fld flex-grow-1" style="height:37px;width:auto" readonly>Oliver James</textarea></div>
<div class="d-flex" style="margin-top:10px"><label for="u" style="width:64px">Subject:</label><input id="u" class="fld flex-grow-1" style="width:auto" readonly value="RE: Task Amendments"></div>
<div class="mail-box d-flex flex-grow-1" style="min-height:0">
<article class="mail-txt flex-grow-1"><p>Thanks Oliver,</p><p>I appreciate your attention to this matter. I agree the tasks allocated are important, so I'm happy to juggle the allocation as needed.</p><p>Eliza Smith<br>ext. 8503</p>
<div class="quoted"><p><b>From:</b> Oliver James<br><b>Sent:</b> Mon 10/08/2020 13:24<br><b>To:</b> Eliza Smith<br><b>Subject:</b> RE: Task Amendments</p><p>Thanks Eliza,</p><p>They are high priorities for us. If we need to discuss resource allocation, I'm available at 2.30 today.</p><p>Regards.</p></div></article>
<div class="sbar d-flex flex-column flex-shrink-0"><button type="button" aria-label="Scroll up"><span class="up-a"></span></button><i class="th172"></i><button type="button" class="dn" aria-label="Scroll down"><span class="dn-a"></span></button></div>
</div></div>
<section class="collab d-flex flex-column flex-shrink-0">
<div class="dock-head d-flex align-items-center flex-shrink-0"><h2 class="dock-title m-0 me-auto ps-1">Collaborations</h2><div class="d-flex align-items-center gap-2"><svg width="9" height="5"><use href="#down"/></svg><svg class="i12"><use href="#pin"/></svg><svg class="i12 text-secondary"><use href="#ex"/></svg></div></div>
<nav class="dtabs d-flex flex-shrink-0" style="height:28px;line-height:22px;gap:13px;padding-left:7px"><a href="#">Reviews</a><a href="#">Discussions</a><a href="#">Comments</a><a href="#">Chat</a><a class="on" href="#">Mail</a></nav>
<div class="gapbar flex-shrink-0"></div>
<div class="d-flex flex-grow-1" style="min-height:0">
<div class="pane-white flex-grow-1"><div class="groupby"><span>Drag a column header here to group by that column.</span></div>
<table class="mtable"><colgroup><col class="c-f"><col class="c-m"><col class="c-s"><col><col class="c-d"></colgroup>
<thead><tr><th class="ic"><svg class="i16"><use href="#flag"/></svg></th><th class="ic"><svg class="i16"><use href="#env"/></svg></th><th>Sender</th><th>Subject</th><th><div class="d-flex align-items-center justify-content-between">Sent<svg width="9" height="5" class="me-1"><use href="#down"/></svg></div></th></tr></thead>
<tbody><tr class="pick"><td class="ic"><svg class="i16 text-secondary"><use href="#flag"/></svg></td><td class="ic"><svg class="i16"><use href="#openmail"/></svg></td><td>Eliza Smith</td><td>RE: Task Amendments</td><td>Mon 10/08/2020 13:38</td></tr>
<tr><td class="ic"><svg class="i16 text-secondary"><use href="#flag"/></svg></td><td class="ic"><svg class="i16" viewBox="0 0 16 16"><use href="#openmail"/><use href="#arrow-l" x="6" y="6" width="10" height="10" fill="#2f7d1e"/></svg></td><td>Eliza Smith</td><td>Task Amendments</td><td>Mon 10/08/2020 13:23</td></tr></tbody></table></div>
<div class="split-p flex-shrink-0"></div>
<article class="preview flex-shrink-0"><div class="pv-clip"><p class="fw-bold" style="line-height:21px">RE: Task Amendments</p><div style="font-size:10px;line-height:20px"><b>From:</b> Eliza Smith<br><b>To:</b> Oliver James</div><p style="margin-top:26px">Thanks Oliver,</p><p style="margin-top:31px">I appreciate your attention to this matter. I agree the tasks allocated are important, so I'm happy</p></div></article>
<div class="sbar d-flex flex-column flex-shrink-0"><button type="button" aria-label="Scroll up"><span class="up-a"></span></button><i class="th26"></i><button type="button" class="dn" aria-label="Scroll down"><span class="dn-a"></span></button></div>
</div></section>
</section>
<div class="split-v flex-shrink-0"></div>

<aside class="dock-r d-flex flex-column flex-shrink-0">
<div class="dock-head d-flex align-items-center flex-shrink-0"><h2 class="dock-title m-0 me-auto ps-1">Collaborate</h2><div class="d-flex align-items-center gap-2"><svg width="9" height="5"><use href="#down"/></svg><svg class="i12"><use href="#pin"/></svg><svg class="i12 text-secondary"><use href="#ex"/></svg></div></div>
<nav class="dtabs d-flex flex-shrink-0" style="height:28px;line-height:22px;gap:13px;padding-left:7px"><a href="#">Review</a><a href="#">Discuss</a><a href="#">Comment</a><a class="on" href="#">Chat</a><a href="#">Journal</a></nav>
<div class="gapbar flex-shrink-0"></div>
<div class="tool d-flex align-items-center px-2 flex-shrink-0"><svg class="i16 me-1"><use href="#ham"/></svg><select class="bare-select flex-grow-1" aria-label="Chat with"><option>Eliza Smith</option></select><span class="caret-sm me-2"></span><svg class="i16 ms-1" viewBox="0 0 16 16"><path d="M1 2h5v3H1zM1 6.500h5v3H1zM1 11h5v3H1z" fill="#6a87a8"/><path d="M8 3.500l2 1.500 4-4M8.500 6.500l3 3M11.500 6.500l-3 3M8 12.500l2 1.500 4-4" fill="none" stroke="#111" stroke-width="1.200"/></svg><span class="caret-sm ms-1"></span></div>
<div class="pane-white d-flex gap-1 flex-shrink-0" style="padding:3px 4px 6px"><textarea class="chatbox flex-grow-1" aria-label="Message"></textarea><button type="button" class="send">Send</button></div>
<div class="d-flex flex-shrink-0" style="height:357px">
<div class="flex-grow-1 pane-white overflow-hidden">
<div class="msg d-flex"><div class="when d-flex flex-column align-items-center flex-shrink-0"><svg width="14" height="18" viewBox="0 0 14 18" class="align-self-end"><use href="#man" fill="#6ba4bb"/></svg><span class="pt-1">9:09</span></div><div><div class="who">Eliza</div><div class="say">Appreciate it.</div></div></div>
<div class="msg d-flex"><div class="when d-flex flex-column align-items-center flex-shrink-0"><svg width="14" height="18" viewBox="0 0 14 18" class="align-self-end"><use href="#man" fill="#6ba4bb"/></svg><span class="pt-1">15:19</span></div><div><div class="who">Oliver<em>18 aug</em></div><div class="say">Here is the operations manual I<br>mentioned: <a href="#">IATA Airport<br>Handling Manual</a></div></div></div>
<div class="msg d-flex"><div class="when d-flex flex-column align-items-center flex-shrink-0"><svg width="14" height="18" viewBox="0 0 14 18" class="align-self-end"><use href="#man" fill="#6ba4bb"/></svg><span class="pt-1">15:08</span></div><div><div class="who">Eliza<em>27 jul</em></div><div class="say">Thanks. Looking at it now.</div></div></div>
<div class="msg d-flex"><div class="when d-flex flex-column align-items-center flex-shrink-0"><svg width="14" height="18" viewBox="0 0 14 18" class="align-self-end"><use href="#man" fill="#6ba4bb"/></svg><span class="pt-1">14:34</span></div><div><div class="who">Oliver<em>27 jul</em></div><div class="say">FYI - incase it effects your<br>workload: <a href="#">Security Control<br>Counters not displaying updated<br>queuing data</a></div></div></div>
</div>
<div class="sbar d-flex flex-column flex-shrink-0"><button type="button" aria-label="Scroll up"><span class="up-a"></span></button><i class="th150"></i><button type="button" class="dn" aria-label="Scroll down"><span class="dn-a"></span></button></div></div>
<section class="d-flex flex-column flex-grow-1" style="min-height:0;border-top:6px solid #cbcbcb">
<div class="dock-head d-flex align-items-center flex-shrink-0"><h2 class="dock-title m-0 me-auto ps-1">Properties</h2><div class="d-flex align-items-center gap-2"><svg width="9" height="5"><use href="#down"/></svg><svg class="i12"><use href="#pin"/></svg><svg class="i12 text-secondary"><use href="#ex"/></svg></div></div>
<div class="tool d-flex align-items-center ps-1 flex-shrink-0"><svg class="i16 ms-1 me-1" viewBox="0 0 16 16"><path d="M1 1h14v14H1z" fill="#9db8d8"/><path d="M4 1h8v6H4zM4 10h8v5H4z" fill="#f4f4f4"/><path d="M5 11h2v3H5z" fill="#9db8d8"/></svg><svg width="14" height="14" class="ms-1"><use href="#ham"/></svg><span class="caret-sm ms-2 me-1"></span><svg class="i16 ms-1" viewBox="0 0 16 16"><path d="M1 3.500h13v11H1z" fill="#fff" stroke="#3f6ea5"/><path d="M7.500 4v11M2 8.500h11M2 11.500h11" stroke="#8aa9cf"/><path d="M3 5l5-4h7v5H9L7 8z" fill="#d8cf5a" stroke="#6b6414"/></svg><svg width="7" height="14" viewBox="0 0 8 14" class="ms-2 me-auto"><path d="M0 0l8 7-8 7z" fill="#bcbce8"/></svg></div>
<nav class="dtabs d-flex flex-shrink-0" style="height:28px;line-height:22px;gap:13px;padding-left:7px"><a class="on" href="#">Diagram</a><a href="#">Compartments</a></nav>
<div class="gapbar flex-shrink-0"></div>
<div class="d-flex flex-grow-1 border-top border-start" style="min-height:0"><div class="flex-grow-1 overflow-hidden pane-white">
<table class="pgrid"><colgroup><col class="g1"><col class="g2"><col></colgroup>
<tr class="cat"><td class="gut"><div class="tri-c"></div></td><th colspan="2">General</th></tr>
<tr><td class="gut"></td><td class="nm sel">Name</td><td>Staff</td></tr>
<tr><td class="gut"></td><td class="nm">Type</td><td>Class</td></tr>
<tr><td class="gut"></td><td class="nm">Stereotype</td><td></td></tr>
<tr><td class="gut"></td><td class="nm">Author</td><td>Eliza Smith</td></tr>
<tr><td class="gut"></td><td class="nm">Applied Metamodel</td><td>Default</td></tr>
<tr><td class="gut"></td><td class="nm"><label for="p1">Filter to Metamodel</label></td><td><input type="checkbox" id="p1"></td></tr>
<tr><td class="gut"></td><td class="nm"><label for="p2">Filter to Context</label></td><td><input type="checkbox" id="p2"></td></tr>
<tr><td class="gut"></td><td class="nm"><label for="p3">Context Navigation</label></td><td><input type="checkbox" id="p3"></td></tr>
<tr class="cat"><td class="gut"><div class="tri-c"></div></td><th colspan="2">Version</th></tr>
<tr><td class="gut"></td><td class="nm">Version</td><td>1.0</td></tr>
<tr><td class="gut"></td><td class="nm"><label for="p4">Filter to Version</label></td><td><input type="checkbox" id="p4"></td></tr></table></div>
<div class="sbar d-flex flex-column flex-shrink-0"><button type="button" aria-label="Scroll up"><span class="up-a"></span></button><i class="th51"></i><button type="button" class="dn" aria-label="Scroll down"><span class="dn-a"></span></button></div></div>
<div class="btabs d-flex flex-shrink-0 ps-1"><a href="#" class="btab"><span>Notes</span></a><a href="#" class="btab cur yel ms-1"><span>Properties</span></a></div>
</section></aside>
</main>

<footer class="status d-flex align-items-center justify-content-end flex-shrink-0">
<span class="me-4">Change Management</span><span class="sep24 me-4" style="height:9px"></span><button type="button" aria-label="Zoom out"><svg width="8" height="2"><path d="M0 1h8" stroke="#999" stroke-width="2"/></svg></button>
<input type="range" class="zoomr ms-2 me-1" value="0" aria-label="Zoom"><button type="button" class="mx-2" aria-label="Zoom in"><svg width="9" height="9"><path d="M0 4.500h9M4.500 0v9" stroke="#999" stroke-width="2"/></svg></button>
<div class="keys d-flex ps-1"><span class="dim">CAP</span><span>NUM</span><span class="dim">SCRL</span><span>CLOUD</span></div></footer>
<div class="strip flex-shrink-0"></div>
<script src="https://cdn.jsdelivr.net/npm/bootstrap@5.3.0/dist/js/bootstrap.bundle.min.js"></script>
</body>
</html>
